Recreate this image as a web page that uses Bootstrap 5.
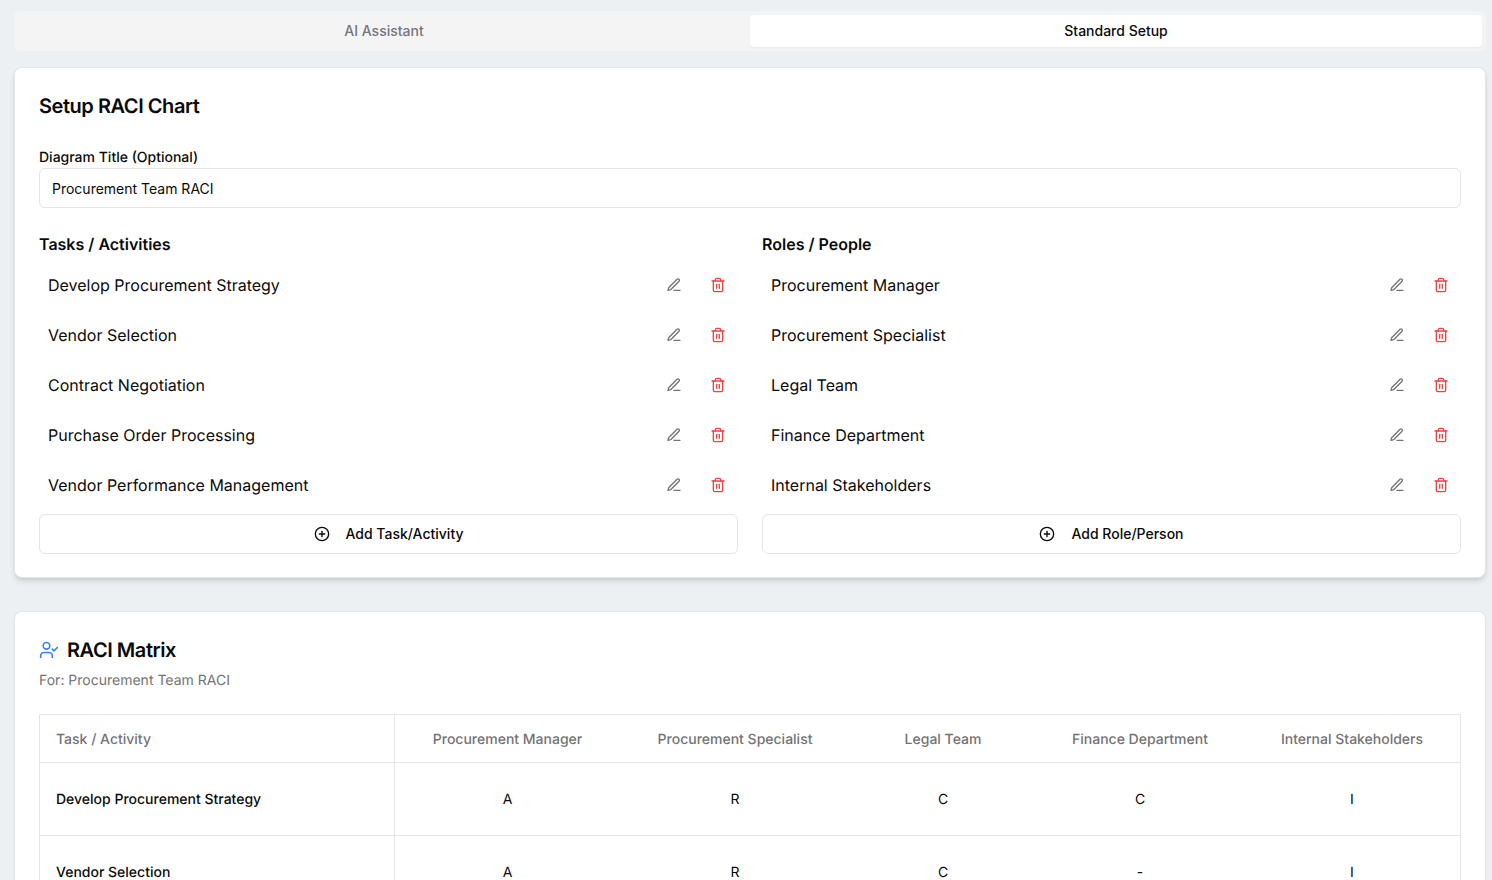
<!doctype html>
<html lang="en">
  <head>
    <meta charset="utf-8">
    <meta name="viewport" content="width=device-width, initial-scale=1">
    <title>RACI Chart</title>
    <link href="https://cdn.jsdelivr.net/npm/bootstrap@5.3.0/dist/css/bootstrap.min.css" rel="stylesheet">
    <style>
      body {
        background: #edf0f3;
        font-family: Inter, "Liberation Sans", sans-serif;
        color: #0a0a0a;
        padding: 11px 6px 0 14px;
        text-rendering: geometricPrecision;
      }
      .tab-strip {
        background: #f4f4f5;
        border-radius: 6px;
        padding: 4px;
        height: 40px;
      }
      .tab-item {
        flex: 1 1 0;
        border: 0;
        background: none;
        font-size: 14px;
        font-weight: 500;
        line-height: 20px;
        padding: 6px 12px;
        border-radius: 4px;
        color: #74747c;
      }
      .tab-item.on {
        background: #fff;
        color: #0a0a0a;
        box-shadow: 0 1px 2px rgba(0, 0, 0, .05);
      }
      .panel {
        background: #fff;
        border: 1px solid #e5e5e5;
        border-radius: 8px;
        padding: 24px;
      }
      .panel-setup {
        margin-top: 16px;
        height: 511px;
        box-shadow: 0 4px 6px -1px rgba(0, 0, 0, .12), 0 2px 4px -2px rgba(0, 0, 0, .1);
      }
      .panel-matrix {
        margin-top: 33px;
        box-shadow: 0 1px 2px rgba(0, 0, 0, .05);
      }
      .panel-title {
        font-size: 20px;
        font-weight: 600;
        line-height: 28px;
        letter-spacing: -.45px;
        margin: 0;
      }
      .field-label {
        display: block;
        font-size: 14px;
        font-weight: 500;
        line-height: 14px;
        margin: 31px 0 3px;
      }
      .field-input {
        height: 40px;
        font-size: 14px;
        color: #0a0a0a;
        padding: 8px 12px;
        border: 1px solid #e5e5e5;
        border-radius: 6px;
      }
      .col-title {
        font-size: 16px;
        font-weight: 600;
        line-height: 24px;
        margin: 0 0 4px;
      }
      .item-row {
        height: 50px;
        padding-left: 9px;
        font-size: 16px;
      }
      .icon-btn {
        width: 36px;
        height: 36px;
        border: 0;
        background: none;
        padding: 0;
        display: flex;
        align-items: center;
        justify-content: center;
        margin-left: 8px;
        color: #737373;
      }
      .icon-btn.del { color: #ef4444; margin-right: 2px; }
      .add-btn {
        height: 40px;
        width: 100%;
        background: #fff;
        border: 1px solid #e5e5e5;
        border-radius: 6px;
        font-size: 14px;
        font-weight: 500;
        color: #0a0a0a;
        gap: 16px;
        margin-top: 4px;
      }
      .add-label { padding-bottom: 2px; }
      .for-line {
        font-size: 14px;
        line-height: 20px;
        color: #737373;
        margin: 7px 0 23px;
      }
      .matrix {
        width: 100%;
        table-layout: fixed;
        border-collapse: collapse;
        font-size: 14px;
        line-height: 20px;
      }
      .matrix th, .matrix td {
        border-top: 1px solid #e5e5e5;
        border-bottom: 1px solid #e5e5e5;
        text-align: center;
        padding: 17px 16px 15px;
        vertical-align: middle;
      }
      .matrix th {
        height: 48px;
        padding: 2px 16px 0;
        font-weight: 500;
        color: #737373;
      }
      .matrix td { height: 73px; }
      .matrix td:first-child, .matrix th:first-child {
        text-align: left;
        border-left: 1px solid #e5e5e5;
        border-right: 1px solid #e5e5e5;
        width: 355px;
      }
      .matrix td:first-child { font-weight: 500; }
      .matrix td:last-child, .matrix th:last-child {
        border-right: 1px solid #e5e5e5;
      }
      .matrix th:nth-child(2) { width: 225.5px; }
      .matrix th:nth-child(3) { width: 230px; }
      .matrix th:nth-child(4) { width: 186px; }
      .matrix th:nth-child(5) { width: 208px; }
      svg.ico {
        fill: none;
        stroke: currentColor;
        stroke-width: 2;
        stroke-linecap: round;
        stroke-linejoin: round;
        flex: none;
      }
      .head-ico { color: #3b82f6; }
    </style>
  </head>
  <body>
    <svg width="0" height="0" class="position-absolute">
      <symbol id="pen" viewBox="0 0 24 24"><path d="M12 20h9"/><path d="M16.5 3.5a2.12 2.12 0 0 1 3 3L7 19l-4 1 1-4Z"/></symbol>
      <symbol id="trash" viewBox="0 0 24 24"><path d="M3 6h18"/><path d="M19 6v14c0 1-1 2-2 2H7c-1 0-2-1-2-2V6"/><path d="M8 6V4c0-1 1-2 2-2h4c1 0 2 1 2 2v2"/><path d="M10 11v6"/><path d="M14 11v6"/></symbol>
      <symbol id="plus" viewBox="0 0 24 24"><circle cx="12" cy="12" r="10"/><path d="M8 12h8"/><path d="M12 8v8"/></symbol>
      <symbol id="usercheck" viewBox="0 0 24 24"><path d="M16 21v-2a4 4 0 0 0-4-4H6a4 4 0 0 0-4 4v2"/><circle cx="9" cy="7" r="4"/><path d="m16 11 2 2 4-4"/></symbol>
    </svg>

    <div class="tab-strip d-flex">
      <button class="tab-item">AI Assistant</button>
      <button class="tab-item on">Standard Setup</button>
    </div>

    <div class="panel panel-setup">
      <h2 class="panel-title">Setup RACI Chart</h2>
      <label class="field-label" for="diagramTitle">Diagram Title (Optional)</label>
      <input class="form-control field-input" id="diagramTitle" value="Procurement Team RACI">

      <div class="d-flex gap-4 mt-4">
        <div class="flex-fill w-50">
          <h3 class="col-title">Tasks / Activities</h3>
          <div class="d-flex align-items-center item-row"><span class="flex-grow-1">Develop Procurement Strategy</span><button class="icon-btn"><svg class="ico" width="16" height="16"><use href="#pen"/></svg></button><button class="icon-btn del"><svg class="ico" width="16" height="16"><use href="#trash"/></svg></button></div>
          <div class="d-flex align-items-center item-row"><span class="flex-grow-1">Vendor Selection</span><button class="icon-btn"><svg class="ico" width="16" height="16"><use href="#pen"/></svg></button><button class="icon-btn del"><svg class="ico" width="16" height="16"><use href="#trash"/></svg></button></div>
          <div class="d-flex align-items-center item-row"><span class="flex-grow-1">Contract Negotiation</span><button class="icon-btn"><svg class="ico" width="16" height="16"><use href="#pen"/></svg></button><button class="icon-btn del"><svg class="ico" width="16" height="16"><use href="#trash"/></svg></button></div>
          <div class="d-flex align-items-center item-row"><span class="flex-grow-1">Purchase Order Processing</span><button class="icon-btn"><svg class="ico" width="16" height="16"><use href="#pen"/></svg></button><button class="icon-btn del"><svg class="ico" width="16" height="16"><use href="#trash"/></svg></button></div>
          <div class="d-flex align-items-center item-row"><span class="flex-grow-1">Vendor Performance Management</span><button class="icon-btn"><svg class="ico" width="16" height="16"><use href="#pen"/></svg></button><button class="icon-btn del"><svg class="ico" width="16" height="16"><use href="#trash"/></svg></button></div>
          <button class="add-btn d-flex align-items-center justify-content-center"><svg class="ico" width="16" height="16"><use href="#plus"/></svg><span class="add-label">Add Task/Activity</span></button>
        </div>
        <div class="flex-fill w-50">
          <h3 class="col-title">Roles / People</h3>
          <div class="d-flex align-items-center item-row"><span class="flex-grow-1">Procurement Manager</span><button class="icon-btn"><svg class="ico" width="16" height="16"><use href="#pen"/></svg></button><button class="icon-btn del"><svg class="ico" width="16" height="16"><use href="#trash"/></svg></button></div>
          <div class="d-flex align-items-center item-row"><span class="flex-grow-1">Procurement Specialist</span><button class="icon-btn"><svg class="ico" width="16" height="16"><use href="#pen"/></svg></button><button class="icon-btn del"><svg class="ico" width="16" height="16"><use href="#trash"/></svg></button></div>
          <div class="d-flex align-items-center item-row"><span class="flex-grow-1">Legal Team</span><button class="icon-btn"><svg class="ico" width="16" height="16"><use href="#pen"/></svg></button><button class="icon-btn del"><svg class="ico" width="16" height="16"><use href="#trash"/></svg></button></div>
          <div class="d-flex align-items-center item-row"><span class="flex-grow-1">Finance Department</span><button class="icon-btn"><svg class="ico" width="16" height="16"><use href="#pen"/></svg></button><button class="icon-btn del"><svg class="ico" width="16" height="16"><use href="#trash"/></svg></button></div>
          <div class="d-flex align-items-center item-row"><span class="flex-grow-1">Internal Stakeholders</span><button class="icon-btn"><svg class="ico" width="16" height="16"><use href="#pen"/></svg></button><button class="icon-btn del"><svg class="ico" width="16" height="16"><use href="#trash"/></svg></button></div>
          <button class="add-btn d-flex align-items-center justify-content-center"><svg class="ico" width="16" height="16"><use href="#plus"/></svg><span class="add-label">Add Role/Person</span></button>
        </div>
      </div>
    </div>

    <div class="panel panel-matrix">
      <div class="d-flex align-items-center gap-2">
        <svg class="ico head-ico" width="20" height="20"><use href="#usercheck"/></svg>
        <h2 class="panel-title">RACI Matrix</h2>
      </div>
      <p class="for-line">For: Procurement Team RACI</p>
      <table class="matrix">
        <thead>
          <tr>
            <th>Task / Activity</th>
            <th>Procurement Manager</th>
            <th>Procurement Specialist</th>
            <th>Legal Team</th>
            <th>Finance Department</th>
            <th>Internal Stakeholders</th>
          </tr>
        </thead>
        <tbody>
          <tr><td>Develop Procurement Strategy</td><td>A</td><td>R</td><td>C</td><td>C</td><td>I</td></tr>
          <tr><td>Vendor Selection</td><td>A</td><td>R</td><td>C</td><td>-</td><td>I</td></tr>
        </tbody>
      </table>
    </div>

    <script src="https://cdn.jsdelivr.net/npm/bootstrap@5.3.0/dist/js/bootstrap.bundle.min.js"></script>
  </body>
</html>
